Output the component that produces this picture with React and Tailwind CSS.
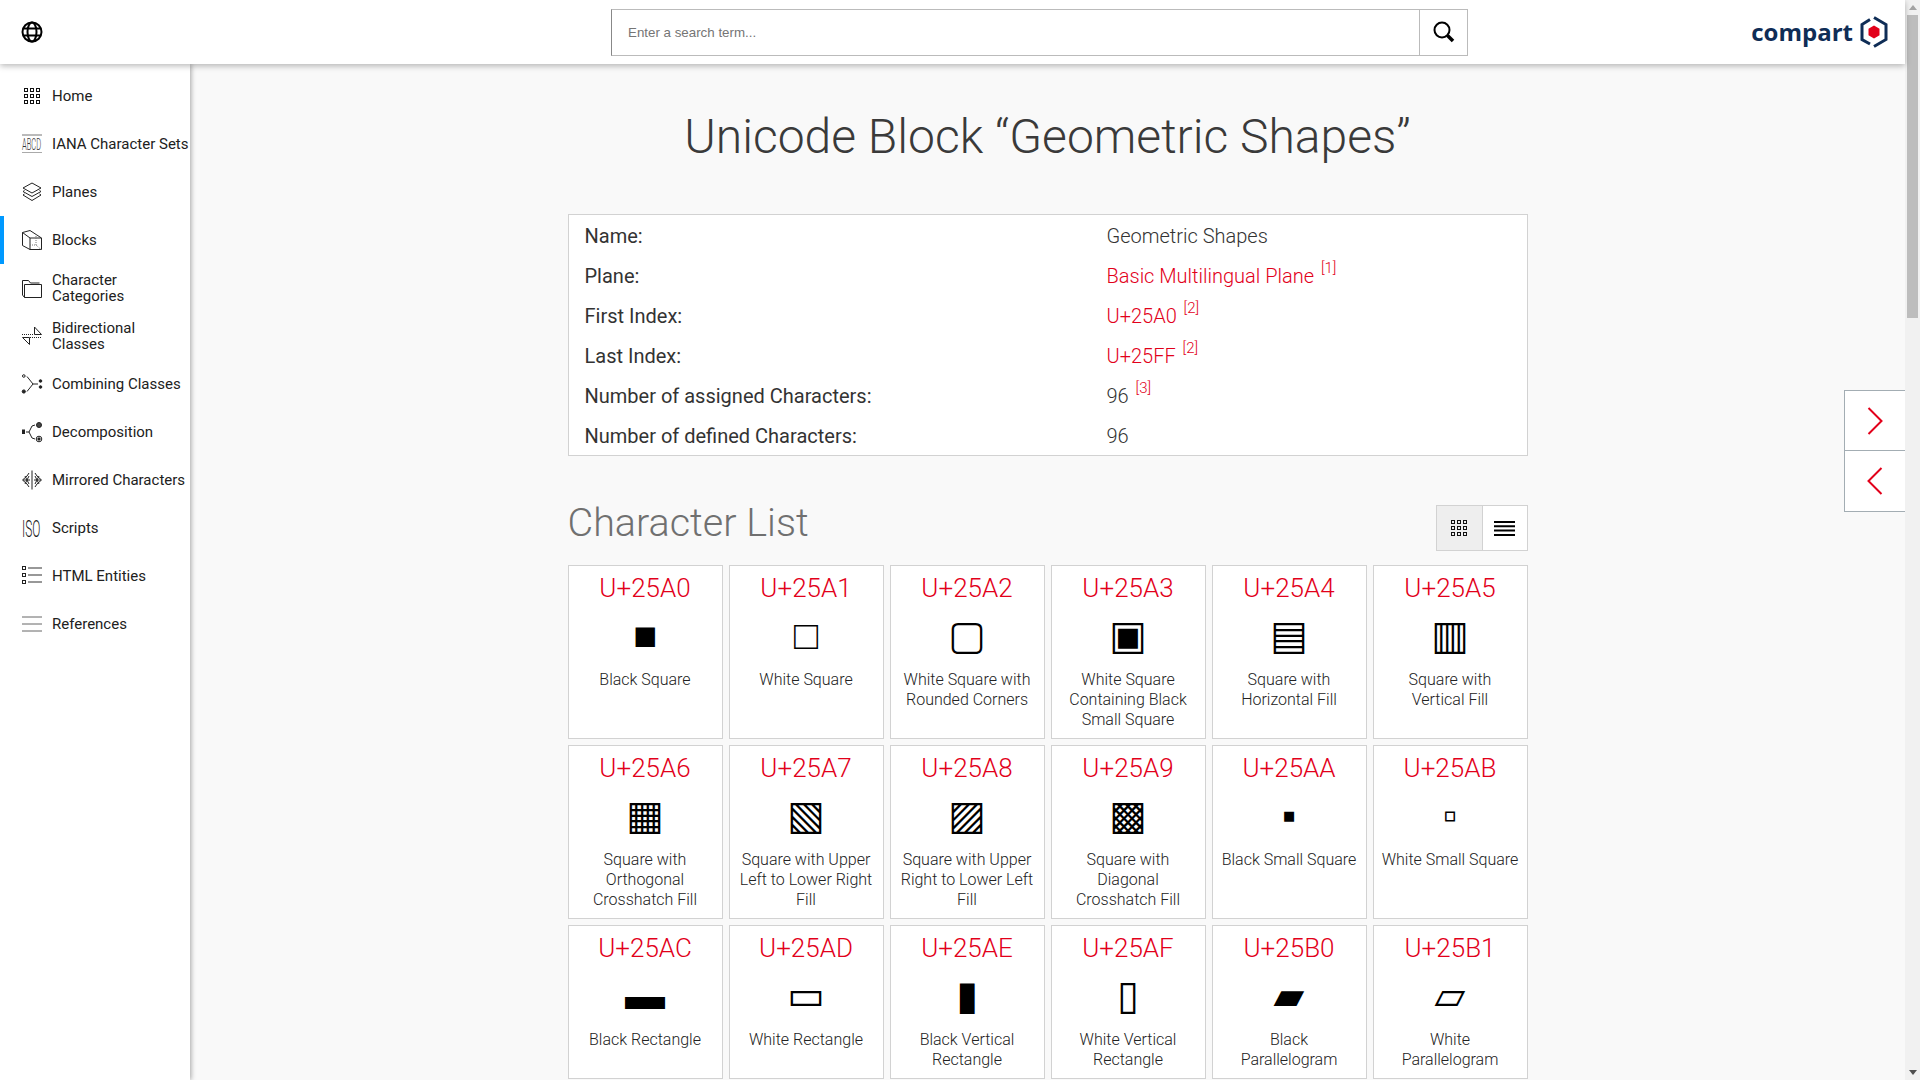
import React from 'react'

const chars = [
  ['U+25A0', '■', 'Black Square'],
  ['U+25A1', '□', 'White Square'],
  ['U+25A2', '▢', 'White Square with Rounded Corners'],
  ['U+25A3', '▣', 'White Square Containing Black Small Square'],
  ['U+25A4', '▤', 'Square with Horizontal Fill'],
  ['U+25A5', '▥', 'Square with Vertical Fill'],
  ['U+25A6', '▦', 'Square with Orthogonal Crosshatch Fill'],
  ['U+25A7', '▧', 'Square with Upper Left to Lower Right Fill'],
  ['U+25A8', '▨', 'Square with Upper Right to Lower Left Fill'],
  ['U+25A9', '▩', 'Square with Diagonal Crosshatch Fill'],
  ['U+25AA', '▪', 'Black Small Square'],
  ['U+25AB', '▫', 'White Small Square'],
  ['U+25AC', '▬', 'Black Rectangle'],
  ['U+25AD', '▭', 'White Rectangle'],
  ['U+25AE', '▮', 'Black Vertical Rectangle'],
  ['U+25AF', '▯', 'White Vertical Rectangle'],
  ['U+25B0', '▰', 'Black Parallelogram'],
  ['U+25B1', '▱', 'White Parallelogram'],
]

function Ico({ children }) {
  return (
    <svg width="20" height="20" viewBox="0 0 20 20" fill="none" stroke="#222" strokeWidth="1" className="shrink-0 overflow-visible">
      {children}
    </svg>
  )
}

function GridIcon({ size = 16 }) {
  const cells = []
  for (let y = 0; y < 3; y++) {
    for (let x = 0; x < 3; x++) {
      cells.push(<rect key={x + '-' + y} x={0.5 + x * 6} y={0.5 + y * 6} width="3" height="3" />)
    }
  }
  return (
    <svg width={size} height={size} viewBox="0 0 16 16" fill="none" stroke="#111" strokeWidth="1">
      {cells}
    </svg>
  )
}

const navItems = [
  {
    label: 'Home',
    icon: <span className="flex w-5 justify-center"><GridIcon /></span>,
  },
  {
    label: 'IANA Character Sets',
    icon: (
      <Ico>
        <path d="M0 1h20" stroke="#777" />
        <path d="M0 18.500h20" stroke="#aaa" />
        <text transform="translate(0 16) scale(.47 1)" fontSize="16" fontWeight="300" fill="#333" stroke="none" fontFamily="Roboto, sans-serif">ABCD</text>
      </Ico>
    ),
  },
  {
    label: 'Planes',
    icon: (
      <Ico>
        <path d="M10 1l9 5-9 5-9-5z" />
        <path d="M2.500 8.500L1 9.500l9 5 9-5-1.500-1" />
        <path d="M2.500 12L1 13l9 5.500L19 13l-1.500-1" />
      </Ico>
    ),
  },
  {
    label: 'Blocks',
    icon: (
      <Ico>
        <path d="M.5 2.500L8 .5l11.500 7.500v11.500H8L.5 15.500z" />
        <path d="M.5 2.500L8 8v11.500M8 8h11.500" />
        <path d="M14 4v11H7M14 15l5 4.500" stroke="#777" strokeDasharray="1 1" />
      </Ico>
    ),
  },
  {
    label: 'Character\nCategories',
    icon: (
      <Ico>
        <path d="M.5 17V2.500h6l2 2.500h9" />
        <path d="M2.500 19.500V6.500h17v13z" />
        <path d="M.5 17l2 2.500" />
      </Ico>
    ),
  },
  {
    label: 'Bidirectional\nClasses',
    icon: (
      <Ico>
        <path d="M0 8.500h12" strokeDasharray="1 1" />
        <path d="M12.500 8.500V1l7 7.500z" />
        <path d="M8 11.500h12" strokeDasharray="1 1" />
        <path d="M7.500 11.500v7l-7-7z" />
      </Ico>
    ),
  },
  {
    label: 'Combining Classes',
    icon: (
      <Ico>
        <circle cx="1.800" cy="2" r="1.300" />
        <circle cx="1.800" cy="17.500" r="1.600" fill="#222" />
        <path d="M5 2.500l6 7.500-6 7.500M11 10h5" />
        <circle cx="18.500" cy="7" r="1.300" fill="#222" />
        <circle cx="18.500" cy="13" r="1.300" fill="#222" />
      </Ico>
    ),
  },
  {
    label: 'Decomposition',
    icon: (
      <Ico>
        <rect x=".5" y="8" width="2" height="3.500" fill="#222" />
        <path d="M4 10h3l3-6 3-1M7 10l3 6 3 1" />
        <circle cx="17" cy="3" r="2.500" fill="#444" />
        <circle cx="17" cy="17" r="2.800" />
        <circle cx="17" cy="17" r="1.200" fill="#222" />
      </Ico>
    ),
  },
  {
    label: 'Mirrored Characters',
    icon: (
      <Ico>
        <path d="M10 .5v19" />
        <path d="M7 3L5 6 .5 10 5 14l2 3M1 10h7M3 6l4 8M3 14l4-8" />
        <path d="M13 3l2 3 4.500 4-4.500 4-2 3M19 10h-7M17 6l-4 8M17 14l-4-8" />
      </Ico>
    ),
  },
  {
    label: 'Scripts',
    icon: (
      <Ico>
        <text transform="translate(0 18.500) scale(.52 1)" fontSize="23" fontWeight="300" fill="#222" stroke="none" fontFamily="Roboto, sans-serif">ISO</text>
      </Ico>
    ),
  },
  {
    label: 'HTML Entities',
    icon: (
      <Ico>
        <rect x=".5" y=".5" width="3" height="3" />
        <rect x=".5" y="7.500" width="3" height="3" />
        <rect x=".5" y="14.500" width="3" height="3" />
        <path d="M6 2h14M6 9h14M6 16h14" stroke="#777" strokeWidth="1.500" />
      </Ico>
    ),
  },
  {
    label: 'References',
    icon: (
      <Ico>
        <path d="M0 3h20M0 10h20M0 17h20" stroke="#666" />
      </Ico>
    ),
  },
]

function Sup({ children }) {
  return <sup className="top-[-10px] ml-[2px] text-[15px] font-light text-[#e2001a]">[{children}]</sup>
}

function InfoRow({ label, children, red }) {
  return (
    <div className="grid h-10 grid-cols-[522px_1fr] items-start leading-[42px]">
      <div className="text-[#333]">{label}</div>
      <div className={red ? 'font-light text-[#e2001a]' : 'font-light text-[#333]'}>{children}</div>
    </div>
  )
}

function Card({ code, glyph, name }) {
  return (
    <div className="border border-[#d2d2d2] bg-white px-2 pt-[5px] pb-2 text-center">
      <div className="text-[26px] font-light leading-[34px] text-[#e2001a]">{code}</div>
      <div className="h-[65px] text-[40px] leading-[61px] text-black">{glyph}</div>
      <div className="text-[16px] font-light leading-5 text-[#222]">{name}</div>
    </div>
  )
}

export default function App() {
  return (
    <div className="flex h-screen overflow-hidden bg-[#f9f9f9] font-[Roboto,'Liberation_Sans','DejaVu_Sans',sans-serif]">
      <div className="flex min-w-0 flex-1 flex-col">
        {/* top bar */}
        <header className="relative z-20 flex h-16 shrink-0 items-center bg-white pl-[21px] pr-[17px] shadow-[0_2px_6px_rgba(0,0,0,0.28)]">
          <svg width="22" height="22" viewBox="0 0 22 22" fill="none" stroke="#000" strokeWidth="2">
            <circle cx="11" cy="11" r="9.500" />
            <ellipse cx="11" cy="11" rx="4.500" ry="9.500" />
            <path d="M2 7.500h18M2 14.500h18" />
          </svg>
          <div className="ml-[568px] flex h-[47px] w-[857px] border border-[#bbb] border-l-[#888] bg-white">
            <div className="flex-1 pl-4 font-['Liberation_Sans',sans-serif] text-[13.33px] leading-[45px] text-[#757575]">
              Enter a search term...
            </div>
            <div className="flex w-[48px] items-center justify-center border-l border-[#bbb]">
              <svg width="22" height="22" viewBox="0 0 22 22" fill="none" stroke="#000">
                <circle cx="9" cy="9" r="7.500" strokeWidth="2" />
                <path d="M14.500 14.500l5.500 5.500" strokeWidth="3.500" />
              </svg>
            </div>
          </div>
          <div className="ml-auto flex items-center gap-[7px]">
            <span className="font-['Open_Sans',sans-serif] text-[24px] font-bold leading-8 text-[#0f2d56]">compart</span>
            <svg width="28" height="32" viewBox="0 0 28 32" fill="none" stroke="#0f2d56" strokeWidth="3">
              <path d="M10 3.500L2 8.500v15l8 4.500" />
              <path d="M14 1.500l12 7v15l-12 7" />
              <path d="M14 9.500l5.500 3.200v6.600L14 22.500l-5.500-3.200v-6.600z" fill="#e2001a" stroke="none" />
            </svg>
          </div>
        </header>

        <div className="flex min-h-0 flex-1">
          {/* side nav */}
          <aside className="relative z-10 w-[190px] shrink-0 bg-white pt-2 shadow-[1px_0_5px_rgba(0,0,0,0.35)]">
            {navItems.map((item) => (
              <div
                key={item.label}
                className={`flex h-12 items-center gap-[10px] text-[15px] leading-4 text-[#212121] ${item.label === 'Blocks' ? 'border-l-4 border-[#0099ff] pl-[18px]' : 'pl-[22px]'}`}
              >
                {item.icon}
                <span className="whitespace-pre">{item.label}</span>
              </div>
            ))}
          </aside>

          {/* main */}
          <main className="relative min-w-0 flex-1 overflow-hidden">
            <div className="mx-auto w-[960px] pt-[45px]">
              <h1 className="text-center text-[48px] font-light leading-14 text-[#3a3a3a]">
                Unicode Block “Geometric Shapes”
              </h1>

              <div className="mt-[49px] border border-[#d2d2d2] bg-white pl-4 text-[20px]">
                <InfoRow label="Name:">Geometric Shapes</InfoRow>
                <InfoRow label="Plane:" red>Basic Multilingual Plane <Sup>1</Sup></InfoRow>
                <InfoRow label="First Index:" red>U+25A0 <Sup>2</Sup></InfoRow>
                <InfoRow label="Last Index:" red>U+25FF <Sup>2</Sup></InfoRow>
                <InfoRow label="Number of assigned Characters:">96 <Sup>3</Sup></InfoRow>
                <InfoRow label="Number of defined Characters:">96</InfoRow>
              </div>

              <div className="mt-[49px] flex items-start justify-between">
                <h2 className="text-[39.5px] font-light leading-9 text-[#707070]">Character List</h2>
                <div className="flex h-[46px] w-[92px] border border-[#d2d2d2] bg-white">
                  <div className="flex w-[46px] items-center justify-center border-r border-[#d2d2d2] bg-[#eee]">
                    <GridIcon />
                  </div>
                  <div className="flex flex-1 items-center justify-center">
                    <svg width="21" height="16" viewBox="0 0 21 16" stroke="#000" strokeWidth="2">
                      <path d="M0 2h21M0 6.300h21M0 10.600h21M0 15h21" />
                    </svg>
                  </div>
                </div>
              </div>

              <div className="mt-[14px] grid grid-cols-6 gap-[6px]">
                {chars.map((c) => (
                  <Card key={c[0]} code={c[0]} glyph={c[1]} name={c[2]} />
                ))}
              </div>
            </div>

            {/* next / previous */}
            <div className="absolute right-0 top-[326px] w-[61px] border border-r-0 border-[#a3adb3] bg-white">
              <div className="flex h-[60px] items-center justify-center border-b border-[#a3adb3]">
                <svg width="16" height="28" viewBox="0 0 16 28" fill="none" stroke="#e2001a" strokeWidth="2">
                  <path d="M1.500 1l13 13-13 13" />
                </svg>
              </div>
              <div className="flex h-[60px] items-center justify-center">
                <svg width="16" height="28" viewBox="0 0 16 28" fill="none" stroke="#e2001a" strokeWidth="2">
                  <path d="M14.500 1l-13 13 13 13" />
                </svg>
              </div>
            </div>
          </main>
        </div>
      </div>

      {/* page scroll bar */}
      <div className="flex w-[15px] shrink-0 flex-col items-center bg-[#f1f1f1]">
        <div className="flex h-[15px] items-center justify-center">
          <div className="h-0 w-0 border-x-[4px] border-b-[5px] border-x-transparent border-b-[#a3a3a3]" />
        </div>
        <div className="h-[303px] w-[11px] bg-[#bdbdbd]" />
        <div className="mt-auto flex h-[15px] items-center justify-center">
          <div className="h-0 w-0 border-x-[4px] border-t-[5px] border-x-transparent border-t-[#505050]" />
        </div>
      </div>
    </div>
  )
}
